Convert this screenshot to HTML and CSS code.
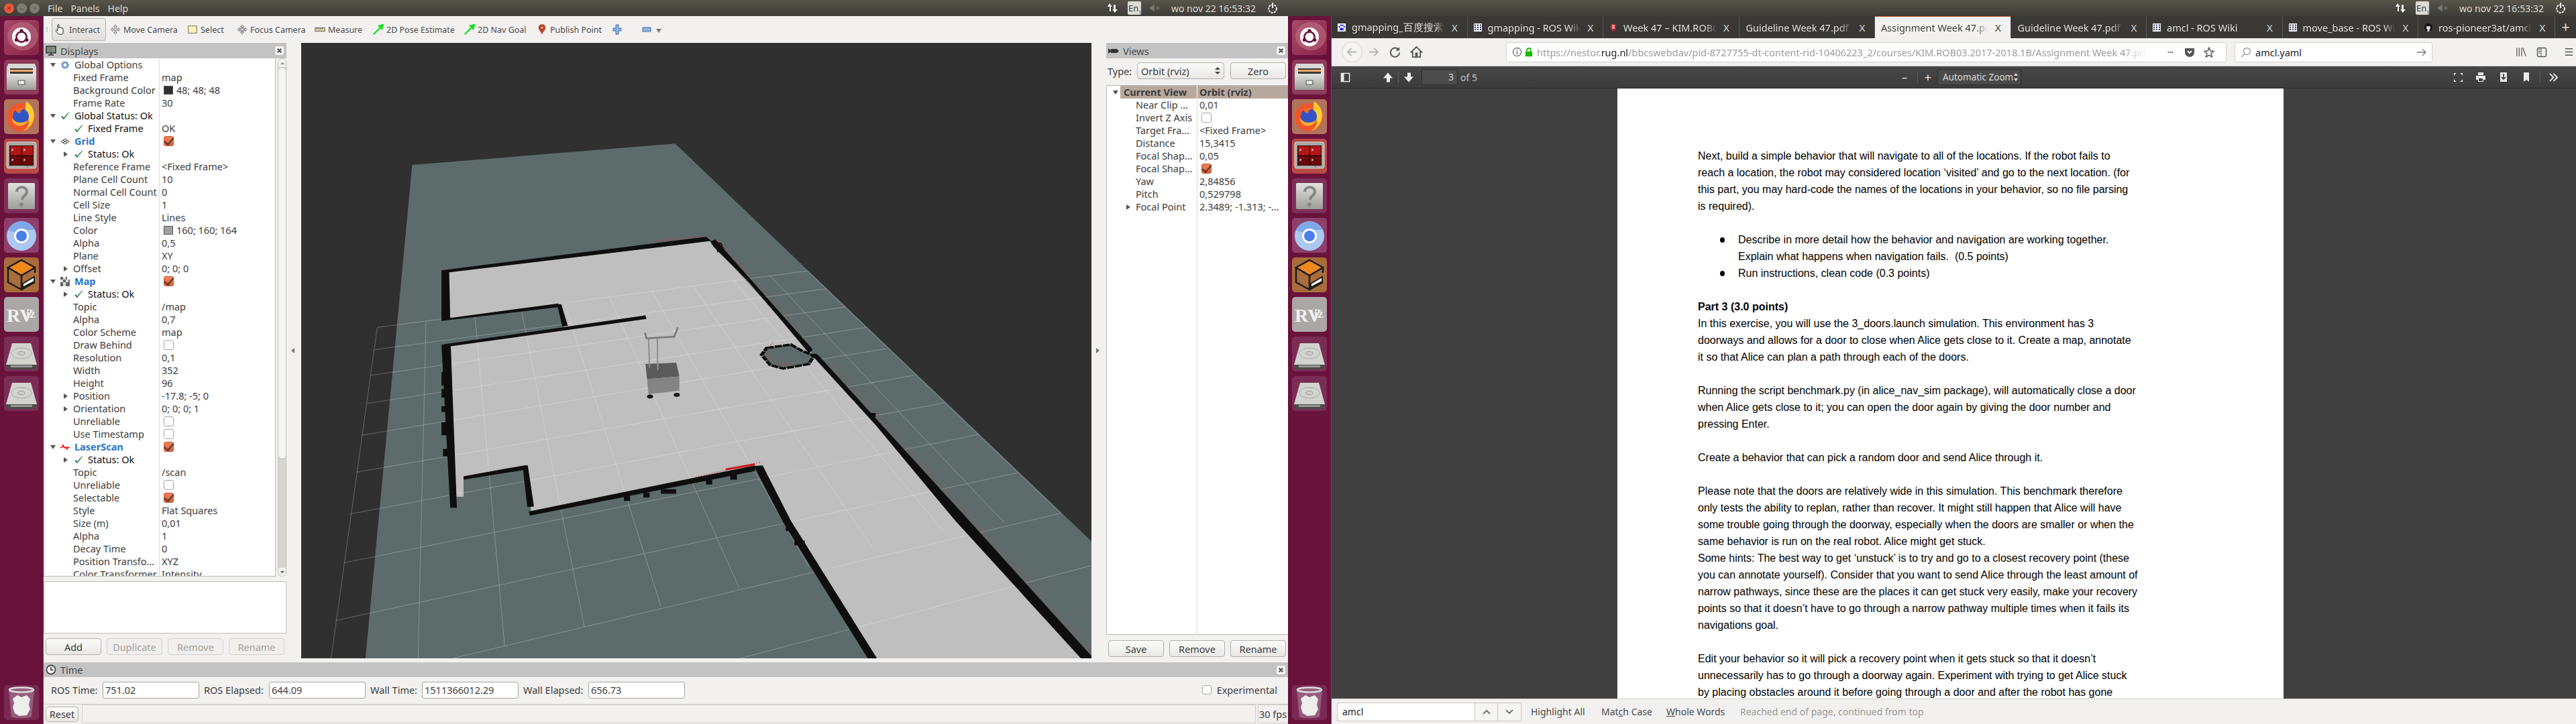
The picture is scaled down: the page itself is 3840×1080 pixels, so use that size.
FILE: index.html
```html
<!DOCTYPE html>
<html lang="en">
<head>
<meta charset="utf-8">
<title>RViz and Firefox</title>
<link rel="stylesheet" href="styles.css">
</head>
<body>
<svg class="defs" width="0" height="0" aria-hidden="true">
  <defs>
    <linearGradient id="tileCrimson" x1="0" y1="0" x2="1" y2="1"><stop offset="0" stop-color="#a44a68"/><stop offset="1" stop-color="#8c2447"/></linearGradient>
    <linearGradient id="metal" x1="0" y1="0" x2="0" y2="1"><stop offset="0" stop-color="#e2e2e0"/><stop offset="1" stop-color="#9c9c98"/></linearGradient>
    <symbol id="i-ubuntu" viewBox="0 0 52 52">
      <rect width="52" height="52" rx="5" fill="url(#tileCrimson)"/>
      <ellipse cx="28" cy="24" rx="23" ry="21" fill="#c87f92" opacity=".45"/>
      <circle cx="26" cy="25" r="14" fill="#fff"/>
      <circle cx="26" cy="25" r="7.6" fill="none" stroke="#6a1239" stroke-width="2.6"/>
      <circle cx="26" cy="16" r="2.7" fill="#6a1239"/><circle cx="18.4" cy="29.6" r="2.7" fill="#6a1239"/><circle cx="33.8" cy="29.6" r="2.7" fill="#6a1239"/>
    </symbol>
    <symbol id="i-files" viewBox="0 0 52 52">
      <rect width="52" height="52" rx="5" fill="#8f3c5a"/>
      <path d="M6 6h40l2 6v33H4V12z" fill="#d8d8d4"/>
      <rect x="9" y="13" width="34" height="9" fill="#3d3a36"/>
      <rect x="9" y="15" width="34" height="3" fill="#f0a668"/>
      <path d="M4 21h44v24H4z" fill="url(#metal)"/>
      <rect x="21" y="31" width="10" height="6" rx="1" fill="#eee" stroke="#555" stroke-width="1.2"/>
    </symbol>
    <symbol id="i-firefox" viewBox="0 0 52 52">
      <rect width="52" height="52" rx="5" fill="#b2735c"/>
      <circle cx="25" cy="27" r="21" fill="#f0562c"/>
      <path d="M33 3c12 8 15 22 9 33-3 6-9 10-14 11 9-5 10-12 8-17-2-7-6-14-3-27z" fill="#ffcb2e"/>
      <circle cx="25" cy="26" r="12" fill="#2f55c8"/>
      <path d="M12 28c5 8 16 9 24 3-3 8-11 10-17 8-4-2-7-6-7-11z" fill="#ffb02a"/>
      <path d="M17 16c4-4 10-4 13-2-3 1-6 4-6 7-3 0-6-2-7-5z" fill="#f26b22"/>
    </symbol>
    <symbol id="i-workspace" viewBox="0 0 52 52">
      <rect width="52" height="52" rx="5" fill="#b84a46"/>
      <rect x="4" y="5" width="44" height="39" rx="3" fill="#a8a8a4" stroke="#e0e0dc" stroke-width="1"/>
      <rect x="8" y="10" width="36" height="30" fill="#2a0606"/>
      <rect x="9.500" y="11" width="16" height="13.500" fill="#b01818"/><rect x="27" y="11" width="16" height="13.500" fill="#b01818"/>
      <rect x="9.500" y="26" width="16" height="13" fill="#6a0a0a"/><rect x="27" y="26" width="16" height="13" fill="#6a0a0a"/>
      <path d="M11 15l3 1.500-3 1.500M29 15l3 1.500-3 1.500M11 30l3 1.500-3 1.500M29 30l3 1.500-3 1.500" stroke="#eee" fill="none"/>
      <circle cx="35" cy="41.500" r="1" fill="#e03030"/>
    </symbol>
    <symbol id="i-help" viewBox="0 0 52 52">
      <rect width="52" height="52" rx="5" fill="#7d3159"/>
      <rect x="6" y="7" width="40" height="39" rx="1.500" fill="url(#metal)"/>
      <path d="M19 20c0-9 15-9 15 0 0 6-7 6-7 12" fill="none" stroke="#858582" stroke-width="4"/>
      <circle cx="26" cy="39" r="3" fill="#858582"/>
    </symbol>
    <symbol id="i-chromium" viewBox="0 0 52 52">
      <rect width="52" height="52" rx="5" fill="#8d3f6b"/>
      <circle cx="26" cy="27" r="22" fill="#aac8f2"/>
      <path d="M6 18A22 22 0 0 1 46 18H26a9 9 0 0 0-9 4z" fill="#7fa8e8"/>
      <circle cx="26" cy="27" r="11" fill="#fff"/><circle cx="26" cy="27" r="8" fill="#4a7fe8"/>
    </symbol>
    <symbol id="i-box" viewBox="0 0 52 52">
      <rect width="52" height="52" rx="5" fill="#a96d3b"/>
      <path d="M26 4l20 11-20 12L6 15z" fill="#f08a1e" stroke="#1c1c1c" stroke-width="2.500"/>
      <path d="M6 15v22l20 11V27M46 15v8M26 48l20-11" fill="none" stroke="#1c1c1c" stroke-width="2.500"/>
      <path d="M28 39l17-10v7l-17 9z" fill="#f4f4f4" stroke="#1c1c1c" stroke-width="2"/>
    </symbol>
    <symbol id="i-rviz" viewBox="0 0 52 52">
      <rect width="52" height="52" rx="5" fill="#aca7a7"/>
      <text class="rviz-mark" x="4" y="37">RV</text><text class="rviz-mark rviz-small" x="33" y="31">iz</text>
    </symbol>
    <symbol id="i-drive" viewBox="0 0 52 52">
      <rect width="52" height="52" rx="5" fill="#7a2d55"/>
      <path d="M12 10h28l9 32H3z" fill="#d2d2cf"/>
      <ellipse cx="26" cy="25" rx="15" ry="8" fill="none" stroke="#a9a9a6"/>
      <ellipse cx="26" cy="25" rx="5" ry="2.500" fill="none" stroke="#999"/>
      <path d="M3 42h46v2l-2 5H5l-2-5z" fill="#4b4b48"/><rect x="10" y="43" width="32" height="3" fill="#999"/>
    </symbol>
    <symbol id="i-trash" viewBox="0 0 52 52">
      <rect width="52" height="52" rx="5" fill="#7a2a52"/>
      <path d="M7 7c2-4 36-4 38 0l-4 40c-1 3-29 3-30 0z" fill="#955f7c"/>
      <ellipse cx="26" cy="7" rx="18" ry="3.500" fill="none" stroke="#ddd" stroke-width="2.500"/>
      <path d="M13 20l7-5 6 3 8-3 5 6-2 8 2 7-5 9-11 1-7-4-3-9 2-6z" fill="#eeeeec"/>
    </symbol>
    <symbol id="i-check" viewBox="0 0 14 14"><path d="M1.500 8l3.500 4L13 1.500C9.500 4.500 7 7.500 5 10.500L3.500 7.500z" fill="#1c7a34" stroke="#1c7a34" stroke-width=".6"/></symbol>
    <symbol id="i-ros" viewBox="0 0 12 12"><rect width="12" height="12" fill="#fff"/><path d="M2 1.500v9M6 1.500v9M10 1.500v9" stroke="#1f2d62" stroke-width="2" stroke-dasharray="2 1.200"/></symbol>
    <symbol id="i-close" viewBox="0 0 14 14"><path d="M4 4l6 6M10 4l-6 6" stroke="#555" stroke-width="2.400"/></symbol>
    <symbol id="i-cross" viewBox="0 0 18 18"><path d="M9 1l3 3h-2v4h4V6l3 3-3 3v-2h-4v4h2l-3 3-3-3h2v-4H4v2L1 9l3-3v2h4V4H6z" fill="#eee" stroke="#777"/></symbol>
  </defs>
</svg>

<div class="desktop">

<section class="screen">
  <header class="panel">
    <div class="winbtns">
      <span class="winbtn winbtn-close">×</span><span class="winbtn">–</span><span class="winbtn">▫</span>
    </div>
    <nav class="menus"><span>File</span><span>Panels</span><span>Help</span></nav>
    <div class="indicators">
      <svg class="ind-net" viewBox="0 0 18 18"><path d="M4 2l4 5H6v7H4V7H1zM12 16l-4-5h2V4h3v7h3z" fill="#eee"/></svg>
      <span class="ind-lang">En<sub>1</sub></span>
      <svg class="ind-sound" viewBox="0 0 18 14"><path d="M1 5h3l4-4v12L4 9H1z" fill="#77756c"/><path d="M11 5l4 4M15 5l-4 4" stroke="#77756c" stroke-width="1.400"/></svg>
      <span class="ind-clock">wo nov 22 16:53:32</span>
      <svg class="ind-gear" viewBox="0 0 18 18"><circle cx="9" cy="10" r="6" fill="none" stroke="#eee" stroke-width="2" stroke-dasharray="3 1.300"/><path d="M9 1v8" stroke="#eee" stroke-width="2"/></svg>
    </div>
  </header>
  <div class="workarea">
    <aside class="launcher">
      <svg class="tile"><use href="#i-ubuntu"/></svg>
      <svg class="tile"><use href="#i-files"/></svg>
      <svg class="tile"><use href="#i-firefox"/></svg>
      <svg class="tile"><use href="#i-workspace"/></svg>
      <svg class="tile"><use href="#i-help"/></svg>
      <svg class="tile"><use href="#i-chromium"/></svg>
      <svg class="tile"><use href="#i-box"/></svg>
      <svg class="tile"><use href="#i-rviz"/></svg>
      <svg class="tile"><use href="#i-drive"/></svg>
      <svg class="tile"><use href="#i-drive"/></svg>
      <svg class="tile tile-trash"><use href="#i-trash"/></svg>
    </aside>

    <main class="rviz">
      <div class="toolbar">
        <span class="grip"></span>
        <span class="tool tool-active">
          <svg class="ti ti-hand" viewBox="0 0 18 18"><path d="M6 16c-2-1-5-4-4.500-6 .5-1 2 0 2.500 1V3c0-2 2-2 2 0v4c0-2 2-1 2 0 0-1 2-1 2 .5 0-1 2-1 2 .5v5c0 2-1 3-1.500 3z" fill="#fff" stroke="#222"/></svg>Interact
        </span>
        <span class="tool tool-move"><svg class="ti" viewBox="0 0 18 18"><use href="#i-cross"/></svg>Move Camera</span>
        <span class="tool tool-select"><svg class="ti" viewBox="0 0 18 18"><rect x="2" y="3" width="14" height="12" fill="#fbf3b8" stroke="#222" stroke-dasharray="2 1"/></svg>Select</span>
        <span class="tool tool-focus"><svg class="ti" viewBox="0 0 18 18"><use href="#i-cross"/><circle cx="9" cy="9" r="4" fill="none" stroke="#777"/></svg>Focus Camera</span>
        <span class="tool tool-measure"><svg class="ti" viewBox="0 0 18 18"><rect x="1" y="6" width="16" height="6" fill="#e4d79c" stroke="#555"/><path d="M4 6v3M7 6v3M10 6v3M13 6v3" stroke="#555"/></svg>Measure</span>
        <span class="tool tool-pose"><svg class="ti" viewBox="0 0 18 18"><path d="M1 17L13 5M17 1l-7 2 5 5z" stroke="#19e01e" stroke-width="2.500" fill="#19e01e"/></svg>2D Pose Estimate</span>
        <span class="tool tool-nav"><svg class="ti" viewBox="0 0 18 18"><path d="M1 17L13 5M17 1l-7 2 5 5z" stroke="#19e01e" stroke-width="2.500" fill="#19e01e"/></svg>2D Nav Goal</span>
        <span class="tool tool-pin"><svg class="ti" viewBox="0 0 18 18"><path d="M9 18C7 12 3 10 3 6a6 6 0 0 1 12 0c0 4-4 6-6 12z" fill="#b8452a"/><circle cx="9" cy="6" r="1.500" fill="#f4d8c8"/></svg>Publish Point</span>
        <svg class="tplus" viewBox="0 0 14 16"><path d="M5 1h4v5h4v4H9v5H5v-5H1V6h4z" fill="#8fb3de" stroke="#3f6fae"/></svg>
        <svg class="tminus" viewBox="0 0 14 8"><rect x="1" y="1" width="12" height="6" fill="#8fb3de" stroke="#3f6fae"/></svg>
        <span class="tri tri-down tri-tool"></span>
      </div>

      <div class="mainrow">
        <div class="dock dock-left">
          <div class="dock-title">
            <svg class="dt-ico" viewBox="0 0 16 16"><rect x="1" y="1" width="14" height="10" fill="#6fa070" stroke="#222" stroke-width="1.300"/><rect x="5" y="2" width="5" height="8" fill="#a06aa0"/><path d="M8 11v2M4 14h8" stroke="#222" stroke-width="1.500"/></svg>
            <span class="dt-text">Displays</span>
            <svg class="dt-close"><use href="#i-close"/></svg>
          </div>
          <div class="treewrap">
            <div class="tree">
              <div class="row"><div class="k k0"><span class="tri tri-down"></span><svg class="st st-gear" viewBox="0 0 14 14"><circle cx="7" cy="7" r="4.500" fill="#a9c5ea" stroke="#3f73b8" stroke-width="2" stroke-dasharray="2 .9"/><circle cx="7" cy="7" r="2" fill="#fff"/></svg><span class="lbl">Global Options</span></div><div class="v"></div></div>
              <div class="row"><div class="k kp">Fixed Frame</div><div class="v">map</div></div>
              <div class="row"><div class="k kp">Background Color</div><div class="v"><i class="swatch sw-bg"></i>48; 48; 48</div></div>
              <div class="row"><div class="k kp">Frame Rate</div><div class="v">30</div></div>
              <div class="row"><div class="k k0 dark"><span class="tri tri-down"></span><svg class="st"><use href="#i-check"/></svg><span class="lbl">Global Status: Ok</span></div><div class="v"></div></div>
              <div class="row"><div class="k k1n dark"><svg class="st"><use href="#i-check"/></svg><span class="lbl">Fixed Frame</span></div><div class="v">OK</div></div>
              <div class="row"><div class="k k0 cat"><span class="tri tri-down"></span><svg class="st" viewBox="0 0 14 14"><path d="M7 3l6 4-6 4-6-4zM4 5l6 4M10 5L4 9" fill="none" stroke="#333"/></svg><span class="lbl">Grid</span></div><div class="v"><i class="cb cb-on"></i></div></div>
              <div class="row"><div class="k k1 dark"><span class="tri tri-right"></span><svg class="st"><use href="#i-check"/></svg><span class="lbl">Status: Ok</span></div><div class="v"></div></div>
              <div class="row"><div class="k kp">Reference Frame</div><div class="v">&lt;Fixed Frame&gt;</div></div>
              <div class="row"><div class="k kp">Plane Cell Count</div><div class="v">10</div></div>
              <div class="row"><div class="k kp">Normal Cell Count</div><div class="v">0</div></div>
              <div class="row"><div class="k kp">Cell Size</div><div class="v">1</div></div>
              <div class="row"><div class="k kp">Line Style</div><div class="v">Lines</div></div>
              <div class="row"><div class="k kp">Color</div><div class="v"><i class="swatch sw-grid"></i>160; 160; 164</div></div>
              <div class="row"><div class="k kp">Alpha</div><div class="v">0,5</div></div>
              <div class="row"><div class="k kp">Plane</div><div class="v">XY</div></div>
              <div class="row"><div class="k kpt"><span class="tri tri-right"></span>Offset</div><div class="v">0; 0; 0</div></div>
              <div class="row"><div class="k k0 cat"><span class="tri tri-down"></span><svg class="st" viewBox="0 0 14 14"><path d="M0 0h4v4H0zM4 4h4v4H4zM8 0h2v4H8zM12 4h2v4h-2zM0 8h4v6H0zM8 8h6v6H8z" fill="#666"/><path d="M4 0h4v4H4zM0 4h4v4H0zM8 4h4v4H8zM4 8h4v6H4z" fill="#ddd"/></svg><span class="lbl">Map</span></div><div class="v"><i class="cb cb-on"></i></div></div>
              <div class="row"><div class="k k1 dark"><span class="tri tri-right"></span><svg class="st"><use href="#i-check"/></svg><span class="lbl">Status: Ok</span></div><div class="v"></div></div>
              <div class="row"><div class="k kp">Topic</div><div class="v">/map</div></div>
              <div class="row"><div class="k kp">Alpha</div><div class="v">0,7</div></div>
              <div class="row"><div class="k kp">Color Scheme</div><div class="v">map</div></div>
              <div class="row"><div class="k kp">Draw Behind</div><div class="v"><i class="cb"></i></div></div>
              <div class="row"><div class="k kp">Resolution</div><div class="v">0,1</div></div>
              <div class="row"><div class="k kp">Width</div><div class="v">352</div></div>
              <div class="row"><div class="k kp">Height</div><div class="v">96</div></div>
              <div class="row"><div class="k kpt"><span class="tri tri-right"></span>Position</div><div class="v">-17.8; -5; 0</div></div>
              <div class="row"><div class="k kpt"><span class="tri tri-right"></span>Orientation</div><div class="v">0; 0; 0; 1</div></div>
              <div class="row"><div class="k kp">Unreliable</div><div class="v"><i class="cb"></i></div></div>
              <div class="row"><div class="k kp">Use Timestamp</div><div class="v"><i class="cb"></i></div></div>
              <div class="row"><div class="k k0 cat"><span class="tri tri-down"></span><svg class="st" viewBox="0 0 14 14"><path d="M0 8l3-1 1-3 2 4 2-1 2 3 1-3 3 1" fill="none" stroke="#f00" stroke-width="1.500"/></svg><span class="lbl">LaserScan</span></div><div class="v"><i class="cb cb-on"></i></div></div>
              <div class="row"><div class="k k1 dark"><span class="tri tri-right"></span><svg class="st"><use href="#i-check"/></svg><span class="lbl">Status: Ok</span></div><div class="v"></div></div>
              <div class="row"><div class="k kp">Topic</div><div class="v">/scan</div></div>
              <div class="row"><div class="k kp">Unreliable</div><div class="v"><i class="cb"></i></div></div>
              <div class="row"><div class="k kp">Selectable</div><div class="v"><i class="cb cb-on"></i></div></div>
              <div class="row"><div class="k kp">Style</div><div class="v">Flat Squares</div></div>
              <div class="row"><div class="k kp">Size (m)</div><div class="v">0,01</div></div>
              <div class="row"><div class="k kp">Alpha</div><div class="v">1</div></div>
              <div class="row"><div class="k kp">Decay Time</div><div class="v">0</div></div>
              <div class="row"><div class="k kp">Position Transfo…</div><div class="v">XYZ</div></div>
              <div class="row"><div class="k kp">Color Transformer</div><div class="v">Intensity</div></div>
            </div>
            <div class="vscroll">
              <span class="vs-btn"><span class="tri tri-up"></span></span>
              <span class="vs-track"><span class="vs-thumb"></span></span>
              <span class="vs-btn"><span class="tri tri-down tri-small"></span></span>
            </div>
          </div>
          <div class="handle"></div>
          <div class="descbox"></div>
          <div class="btnrow">
            <span class="btn">Add</span><span class="btn btn-off">Duplicate</span><span class="btn btn-off">Remove</span><span class="btn btn-off">Rename</span>
          </div>
        </div>

        <div class="split"><span class="tri tri-left"></span></div>

        <div class="view3d">
          <svg class="scene" viewBox="12 -266.600 1538 1798.600" preserveAspectRatio="none">
            <rect x="12" y="-267" width="1538" height="1800" fill="#303030"/>
            <polygon class="teal" points="228,90 740,28 1550,1190 1550,1533 137,1533"/>
            <polygon class="floor" points="298,403 808,312 1550,1545 1130,1545 900,975 460,1108 448,975 328,1005 328,1060 312,1060 303,618 525,570 512,500 300,540"/>
            <polygon class="teal" points="918,630 965,615 1003,660 945,682 915,650"/>
            <g class="gridlines">
              <line x1="160" y1="565" x2="997" y2="400"/><line x1="155" y1="630" x2="1035" y2="452"/><line x1="148" y1="705" x2="1072" y2="505"/><line x1="140" y1="787" x2="1112" y2="565"/><line x1="130" y1="880" x2="1150" y2="627"/><line x1="120" y1="988" x2="1205" y2="705"/><line x1="108" y1="1110" x2="1265" y2="785"/><line x1="95" y1="1253" x2="1330" y2="878"/><line x1="78" y1="1422" x2="1405" y2="990"/><line x1="62" y1="1620" x2="1490" y2="1108"/><line x1="40" y1="1860" x2="1590" y2="1245"/>
              <line x1="160" y1="565" x2="62" y2="1620"/><line x1="255" y1="546" x2="239" y2="1557"/><line x1="350" y1="528" x2="408" y2="1497"/><line x1="440" y1="510" x2="563" y2="1440"/><line x1="525" y1="495" x2="712" y2="1380"/><line x1="612" y1="476" x2="864" y2="1325"/><line x1="695" y1="460" x2="1000" y2="1265"/><line x1="775" y1="445" x2="1125" y2="1210"/><line x1="855" y1="430" x2="1262" y2="1160"/><line x1="925" y1="415" x2="1380" y2="1135"/><line x1="997" y1="400" x2="1490" y2="1108"/>
            </g>
            <g class="walls">
              <polygon points="285,398 800,300 810,312 300,404 302,537 512,495 517,505 285,546"/>
              <polygon points="510,497 518,497 531,560 520,562"/>
              <polygon points="286,615 682,530 684,540 303,620"/>
              <polygon points="285,615 303,618 315,1092 302,1092"/>
              <rect x="285" y="695" width="16" height="40"/><rect x="285" y="745" width="17" height="25"/><rect x="285" y="795" width="16" height="17"/><rect x="285" y="842" width="18" height="38"/><rect x="288" y="920" width="20" height="22"/>
              <polygon points="328,1000 450,967 452,980 328,1010"/>
              <polygon points="443,970 453,968 465,1088 452,1090"/>
              <polygon points="455,1103 895,968 895,985 457,1115"/>
              <rect x="640" y="1055" width="12" height="17"/><rect x="678" y="1048" width="12" height="14"/><rect x="712" y="1038" width="30" height="13"/><rect x="800" y="1010" width="12" height="14"/><rect x="847" y="995" width="13" height="15"/>
              <polygon points="893,970 910,968 965,1130 1133,1533 1115,1533 950,1135"/>
              <rect x="955" y="1148" width="17" height="12"/><rect x="972" y="1188" width="20" height="14"/>
              <polygon points="808,314 818,308 1008,630 1000,640 885,435 845,375 815,330"/>
              <polygon points="815,312 830,318 838,345 822,345"/>
              <polygon points="1000,642 1015,642 1022,652 1145,855 1300,1110 1550,1525 1550,1533 1530,1533 1285,1130 1130,850 1012,656"/>
              <rect x="1118" y="815" width="12" height="12"/>
              <polygon class="hole" points="918,625 965,615 985,632 1010,648 1000,672 950,685 925,675 908,645"/>
            </g>
            <g class="laser">
              <line x1="695" y1="315" x2="790" y2="298"/><line x1="820" y1="310" x2="985" y2="575"/><line x1="1040" y1="665" x2="1130" y2="815"/><line x1="1130" y1="815" x2="1550" y2="1510"/><line x1="780" y1="1002" x2="908" y2="958"/>
              <path d="M930 607l-12 25 4 26 20 14 30 2"/>
            </g>
            <polygon class="laser-thick" points="838,977 895,962 895,968 838,983"/>
            <g class="robot">
              <polygon class="r-top" points="682,672 742,668 748,708 685,716"/>
              <polygon class="r-front" points="685,716 748,708 748,750 688,760"/>
              <circle class="r-wheel" cx="691" cy="767" r="6"/><circle class="r-wheel" cx="743" cy="762" r="6"/>
              <path class="r-pole" d="M688 598l2 84M705 598l1 92"/>
              <path class="r-handle" d="M681 580l3 17 54-5 7-27"/>
            </g>
          </svg>
        </div>

        <div class="split"><span class="tri tri-rightg"></span></div>

        <div class="dock dock-right">
          <div class="dock-title">
            <svg class="dt-ico" viewBox="0 0 16 16"><path d="M0 4l4 3V5h9l3 3-3 3H4V9l-4 3z" fill="#333"/></svg>
            <span class="dt-text">Views</span>
            <svg class="dt-close"><use href="#i-close"/></svg>
          </div>
          <div class="typerow">
            <span class="type-lbl">Type:</span>
            <span class="combo">Orbit (rviz)<span class="updown"></span></span>
            <span class="btn btn-zero">Zero</span>
          </div>
          <div class="vtree">
            <div class="row vrow-h"><div class="vk vk-h"><span class="tri tri-down vtri"></span><b>Current View</b></div><div class="vv vv-h"><b>Orbit (rviz)</b></div></div>
            <div class="row"><div class="vk">Near Clip …</div><div class="vv">0,01</div></div>
            <div class="row"><div class="vk">Invert Z Axis</div><div class="vv"><i class="cb"></i></div></div>
            <div class="row"><div class="vk">Target Fra…</div><div class="vv">&lt;Fixed Frame&gt;</div></div>
            <div class="row"><div class="vk">Distance</div><div class="vv">15,3415</div></div>
            <div class="row"><div class="vk">Focal Shap…</div><div class="vv">0,05</div></div>
            <div class="row"><div class="vk">Focal Shap…</div><div class="vv"><i class="cb cb-on"></i></div></div>
            <div class="row"><div class="vk">Yaw</div><div class="vv">2,84856</div></div>
            <div class="row"><div class="vk">Pitch</div><div class="vv">0,529798</div></div>
            <div class="row"><div class="vk vk-t"><span class="tri tri-right"></span>Focal Point</div><div class="vv">2.3489; -1.313; -…</div></div>
            <div class="vfill"><div class="vfill-l"></div></div>
          </div>
          <div class="btnrow btnrow-right">
            <span class="btn">Save</span><span class="btn">Remove</span><span class="btn">Rename</span>
          </div>
        </div>
      </div>

      <div class="timedock">
        <div class="dock-title">
          <svg class="dt-ico" viewBox="0 0 16 16"><circle cx="8" cy="8" r="6.500" fill="#fff" stroke="#444" stroke-width="1.800"/><path d="M8 4v4.500h3.500" fill="none" stroke="#222" stroke-width="1.500"/></svg>
          <span class="dt-text">Time</span>
          <svg class="dt-close"><use href="#i-close"/></svg>
        </div>
        <div class="timerow">
          <span class="tl tl-a">ROS Time:</span><span class="tf">751.02</span>
          <span class="tl tl-b">ROS Elapsed:</span><span class="tf">644.09</span>
          <span class="tl tl-a">Wall Time:</span><span class="tf">1511366012.29</span>
          <span class="tl tl-b">Wall Elapsed:</span><span class="tf">656.73</span>
          <span class="exp"><i class="cb"></i>Experimental</span>
        </div>
      </div>

      <div class="statusbar">
        <span class="btn btn-reset">Reset</span>
        <span class="sb-box"></span>
        <span class="sb-fps">30 fps</span>
      </div>
    </main>
  </div>
</section>

<section class="screen">
  <header class="panel">
    <div class="indicators">
      <svg class="ind-net" viewBox="0 0 18 18"><path d="M4 2l4 5H6v7H4V7H1zM12 16l-4-5h2V4h3v7h3z" fill="#eee"/></svg>
      <span class="ind-lang">En<sub>1</sub></span>
      <svg class="ind-sound" viewBox="0 0 18 14"><path d="M1 5h3l4-4v12L4 9H1z" fill="#77756c"/><path d="M11 5l4 4M15 5l-4 4" stroke="#77756c" stroke-width="1.400"/></svg>
      <span class="ind-clock">wo nov 22 16:53:32</span>
      <svg class="ind-gear" viewBox="0 0 18 18"><circle cx="9" cy="10" r="6" fill="none" stroke="#eee" stroke-width="2" stroke-dasharray="3 1.300"/><path d="M9 1v8" stroke="#eee" stroke-width="2"/></svg>
    </div>
  </header>
  <div class="workarea">
    <aside class="launcher">
      <svg class="tile"><use href="#i-ubuntu"/></svg>
      <svg class="tile"><use href="#i-files"/></svg>
      <svg class="tile"><use href="#i-firefox"/></svg>
      <svg class="tile"><use href="#i-workspace"/></svg>
      <svg class="tile"><use href="#i-help"/></svg>
      <svg class="tile"><use href="#i-chromium"/></svg>
      <svg class="tile"><use href="#i-box"/></svg>
      <svg class="tile"><use href="#i-rviz"/></svg>
      <svg class="tile"><use href="#i-drive"/></svg>
      <svg class="tile"><use href="#i-drive"/></svg>
      <svg class="tile tile-trash"><use href="#i-trash"/></svg>
    </aside>

    <main class="firefox">
      <div class="tabs">
        <div class="tab"><svg class="fav" viewBox="0 0 12 12"><rect width="12" height="12" fill="#fff"/><path d="M6 6c-3 0-4 4-2 4.500 1 .2 3-.5 4 0C10 11 9 6 6 6z" fill="#2932e1"/><circle cx="2.500" cy="5" r="1.300" fill="#2932e1"/><circle cx="4.800" cy="2.800" r="1.300" fill="#2932e1"/><circle cx="7.500" cy="2.800" r="1.300" fill="#2932e1"/><circle cx="9.800" cy="5" r="1.300" fill="#2932e1"/></svg><span class="tt">gmapping_百度搜索</span><span class="tx">X</span></div>
        <div class="tab"><svg class="fav"><use href="#i-ros"/></svg><span class="tt">gmapping - ROS Wiki</span><span class="tx">X</span></div>
        <div class="tab"><svg class="fav" viewBox="0 0 12 12"><path d="M2 1h8v7l-4 4-4-4z" fill="#c8202c"/><path d="M4 3h4M4 5h4M4 7h4" stroke="#fff"/></svg><span class="tt">Week 47 – KIM.ROB03.2017-2018</span><span class="tx">X</span></div>
        <div class="tab tab-nofav"><span class="tt">Guideline Week 47.pdf</span><span class="tx">X</span></div>
        <div class="tab tab-active"><span class="tt tt-fade">Assignment Week 47.pdf</span><span class="tx">X</span></div>
        <div class="tab tab-nofav"><span class="tt">Guideline Week 47.pdf</span><span class="tx">X</span></div>
        <div class="tab"><svg class="fav"><use href="#i-ros"/></svg><span class="tt">amcl - ROS Wiki</span><span class="tx">X</span></div>
        <div class="tab"><svg class="fav"><use href="#i-ros"/></svg><span class="tt tt-fade">move_base - ROS Wiki</span><span class="tx">X</span></div>
        <div class="tab tab-last"><svg class="fav" viewBox="0 0 12 12"><circle cx="6" cy="6" r="6" fill="#111"/><path d="M4.500 12V9C3 8 2.500 6.500 3.500 5V3.500l1.500.8h2L8.500 3.500V5c1 1.500.5 3-1 4v3z" fill="#ddd"/></svg><span class="tt tt-fade">ros-pioneer3at/amcl</span><span class="tx">X</span></div>
        <span class="newtab">+</span>
      </div>

      <div class="nav">
        <span class="navback"><svg viewBox="0 0 20 20"><path d="M17 10H4M9 4l-6 6 6 6" fill="none" stroke="#b5b5b3" stroke-width="2"/></svg></span>
        <svg class="navicon nav-fwd" viewBox="0 0 20 20"><path d="M3 10h13M11 4l6 6-6 6" fill="none" stroke="#b5b5b3" stroke-width="2"/></svg>
        <svg class="navicon nav-reload" viewBox="0 0 20 20"><path d="M16 7a7 7 0 1 0 1 4" fill="none" stroke="#555" stroke-width="2"/><path d="M17 2v6h-6z" fill="#555"/></svg>
        <svg class="navicon nav-home" viewBox="0 0 20 20"><path d="M10 2l8 8h-2v8H4v-8H2z" fill="none" stroke="#555" stroke-width="2"/><rect x="8" y="11" width="4" height="7" fill="#555"/></svg>
        <div class="urlbar">
          <svg class="ub-info" viewBox="0 0 16 16"><circle cx="8" cy="8" r="6.500" fill="none" stroke="#666" stroke-width="1.300"/><path d="M8 7v5M8 4v1.500" stroke="#666" stroke-width="1.600"/></svg>
          <svg class="ub-lock" viewBox="0 0 14 16"><path d="M3.500 7V5a3.500 3.500 0 0 1 7 0v2" fill="none" stroke="#12bc00" stroke-width="2"/><rect x="1" y="7" width="12" height="9" rx="1" fill="#12bc00"/></svg>
          <span class="ub-url">https://nestor.<b>rug.nl</b>/bbcswebdav/pid-8727755-dt-content-rid-10406223_2/courses/KIM.ROB03.2017-2018.1B/Assignment Week 47.pdf</span>
          <span class="ub-more">•••</span>
          <svg class="ub-pocket" viewBox="0 0 16 16"><path d="M1 2h14v6A7 7 0 0 1 1 8z" fill="#555"/><path d="M5 6l3 3 3-3" fill="none" stroke="#fff" stroke-width="2"/></svg>
          <svg class="ub-star" viewBox="0 0 16 16"><path d="M8 1l2 5 5 .5-4 3.500 1.500 5L8 12.300 3.500 15 5 10 1 6.500 6 6z" fill="none" stroke="#555" stroke-width="1.500"/></svg>
        </div>
        <div class="searchbar">
          <svg class="sb-mag" viewBox="0 0 16 16"><circle cx="9.500" cy="6.500" r="5" fill="none" stroke="#999" stroke-width="1.300"/><path d="M6 10.500L1 15" stroke="#999" stroke-width="1.500"/></svg>
          <span class="sb-text">amcl.yaml</span>
          <svg class="sb-go" viewBox="0 0 16 16"><path d="M1 8h13M9 3l5 5-5 5" fill="none" stroke="#777" stroke-width="1.300"/></svg>
        </div>
        <svg class="tb-lib" viewBox="0 0 18 16"><path d="M2 1v14M6 1v14M10 1v14M12 1l5 14" stroke="#555" stroke-width="1.400"/></svg>
        <svg class="tb-side" viewBox="0 0 16 16"><rect x="1.500" y="1.500" width="13" height="13" rx="2" fill="none" stroke="#555" stroke-width="1.400"/><path d="M7 2v12" stroke="#555"/><path d="M3 4h3M3 6.500h3M3 9h3" stroke="#555"/></svg>
        <svg class="tb-menu" viewBox="0 0 16 16"><path d="M2 3h12M2 8h12M2 13h12" stroke="#555" stroke-width="1.600"/></svg>
      </div>

      <div class="pdfbar">
        <svg class="pb-side" viewBox="0 0 16 16"><rect x="1.500" y="1.500" width="13" height="13" fill="none" stroke="#e8e8e8" stroke-width="1.600"/><rect x="2" y="2" width="4" height="12" fill="#e8e8e8"/></svg>
        <svg class="pb-up" viewBox="0 0 16 16"><path d="M8 1l7 8h-4v6H6V9H1z" fill="#eee"/></svg>
        <i class="pb-sep"></i>
        <svg class="pb-down" viewBox="0 0 16 16"><path d="M8 15l7-8h-4V1H6v6H1z" fill="#eee"/></svg>
        <span class="pb-page">3</span>
        <span class="pb-of">of 5</span>
        <span class="pb-minus">–</span>
        <i class="pb-sep"></i>
        <span class="pb-plus">+</span>
        <span class="pb-zoom">Automatic Zoom<svg class="pb-updown" viewBox="0 0 8 14"><path d="M4 1l3 4H1zM4 13l3-4H1z" fill="#ddd"/></svg></span>
        <svg class="pb-full" viewBox="0 0 16 16"><path d="M1 1h4L1 5zM15 1h-4l4 4zM1 15h4l-4-4zM15 15h-4l4-4z" fill="#e8e8e8"/></svg>
        <svg class="pb-r" viewBox="0 0 16 16"><path d="M4 1h8v4H4zM1 6h14v6h-3v3H4v-3H1z" fill="#e8e8e8"/><rect x="5" y="10" width="6" height="4" fill="#444"/></svg>
        <svg class="pb-r" viewBox="0 0 16 16"><path d="M3 1h10v14H3z" fill="#e8e8e8"/><path d="M8 3v7M5 8l3 3 3-3" fill="none" stroke="#333" stroke-width="1.600"/></svg>
        <svg class="pb-r" viewBox="0 0 16 16"><path d="M4 1h8v14l-4-3-4 3z" fill="#e8e8e8"/></svg>
        <i class="pb-sep pb-sep-r"></i>
        <svg class="pb-more" viewBox="0 0 16 16"><path d="M2 2l6 6-6 6M8 2l6 6-6 6" fill="none" stroke="#e8e8e8" stroke-width="2"/></svg>
      </div>

      <div class="viewer">
        <article class="page">
          <p>Next, build a simple behavior that will navigate to all of the locations. If the robot fails to<br>reach a location, the robot may considered location ‘visited’ and go to the next location. (for<br>this part, you may hard-code the names of the locations in your behavior, so no file parsing<br>is required).</p>
          <ul>
            <li>Describe in more detail how the behavior and navigation are working together.<br>Explain what happens when navigation fails.&nbsp; (0.5 points)</li>
            <li>Run instructions, clean code (0.3 points)</li>
          </ul>
          <p><b>Part 3 (3.0 points)</b><br>In this exercise, you will use the 3_doors.launch simulation. This environment has 3<br>doorways and allows for a door to close when Alice gets close to it. Create a map, annotate<br>it so that Alice can plan a path through each of the doors.</p>
          <p>Running the script benchmark.py (in alice_nav_sim package), will automatically close a door<br>when Alice gets close to it; you can open the door again by giving the door number and<br>pressing Enter.</p>
          <p>Create a behavior that can pick a random door and send Alice through it.</p>
          <p>Please note that the doors are relatively wide in this simulation. This benchmark therefore<br>only tests the ability to replan, rather than recover. It might still happen that Alice will have<br>some trouble going through the doorway, especially when the doors are smaller or when the<br>same behavior is run on the real robot. Alice might get stuck.<br>Some hints: The best way to get ‘unstuck’ is to try and go to a closest recovery point (these<br>you can annotate yourself). Consider that you want to send Alice through the least amount of<br>narrow pathways, since these are the places it can get stuck very easily, make your recovery<br>points so that it doesn’t have to go through a narrow pathway multiple times when it fails its<br>navigations goal.</p>
          <p>Edit your behavior so it will pick a recovery point when it gets stuck so that it doesn’t<br>unnecessarily has to go through a doorway again. Experiment with trying to get Alice stuck<br>by placing obstacles around it before going through a door and after the robot has gone</p>
        </article>
      </div>

      <div class="findbar">
        <span class="fb-input">amcl</span>
        <span class="fb-arrow"><svg viewBox="0 0 12 8"><path d="M1 7l5-5 5 5" fill="none" stroke="#555" stroke-width="1.600"/></svg></span>
        <span class="fb-arrow fb-arrow-d"><svg viewBox="0 0 12 8"><path d="M1 1l5 5 5-5" fill="none" stroke="#555" stroke-width="1.600"/></svg></span>
        <span class="fb-opt fb-h">Highli<u>g</u>ht All</span>
        <span class="fb-opt fb-m">Mat<u>c</u>h Case</span>
        <span class="fb-opt fb-w"><u>W</u>hole Words</span>
        <span class="fb-msg">Reached end of page, continued from top</span>
      </div>
    </main>
  </div>
</section>

</div>
</body>
</html>
```

FILE: styles.css
```css
* { box-sizing: border-box; }
html, body { margin: 0; padding: 0; }
body { width: 3840px; height: 1080px; overflow: hidden; background: #333; font-family: "Noto Sans", sans-serif; font-size: 14px; color: #3c3c3c; }
.defs { display: block; }
.desktop { display: flex; width: 3840px; height: 1080px; }
.screen { width: 1920px; height: 1080px; display: flex; flex-direction: column; }

/* top panel */
.panel { height: 24px; flex: none; display: flex; align-items: center; background: linear-gradient(#57544a, #3d3c37); color: #dfdbd2; font-size: 14px; }
.winbtns { display: flex; gap: 4px; padding-left: 6px; width: 68px; }
.winbtn { width: 15px; height: 15px; border-radius: 50%; background: #7d7b72; color: #3d3c37; font-size: 11px; line-height: 14px; text-align: center; }
.winbtn-close { background: #e9583a; color: #7a2610; }
.menus { display: flex; gap: 12px; padding-left: 3px; }
.indicators { margin-left: auto; display: flex; align-items: center; }
.ind-net { width: 18px; height: 18px; margin-right: 13px; }
.ind-lang { width: 20px; height: 20px; background: #dcdad4; color: #3d3c37; border-radius: 2px; font-size: 13px; line-height: 20px; padding-left: 1px; overflow: hidden; white-space: nowrap; }
.ind-lang sub { font-size: 7px; line-height: 0; }
.ind-sound { width: 18px; height: 14px; margin-left: 12px; }
.ind-clock { margin-left: 15px; width: 135px; white-space: nowrap; }
.ind-gear { width: 18px; height: 18px; margin-left: 7px; margin-right: 14px; }

.workarea { flex: 1; display: flex; min-height: 0; }

/* launcher */
.launcher { width: 65px; flex: none; background: #69123a; border-right: 1px solid #7d3a58; display: flex; flex-direction: column; align-items: flex-start; padding: 6px 0 0 6px; gap: 7px; }
.tile { width: 52px; height: 52px; flex: none; display: block; }
.tile-trash { margin-top: auto; margin-bottom: 6px; }
.rviz-mark { font-family: "Liberation Serif", serif; font-weight: 700; font-size: 28px; fill: #f2f0ee; }
.rviz-small { font-size: 19px; }

/* rviz window */
.rviz { flex: 1; min-width: 0; display: flex; flex-direction: column; background: #f2f1f0; }
.toolbar { height: 40px; flex: none; display: flex; align-items: center; font-size: 12.500px; color: #4a4a4a; white-space: nowrap; }
.grip { width: 4px; height: 8px; margin-left: 4px; border-left: 2px dotted #c5c3bf; border-right: 0; }
.tool { display: inline-flex; align-items: center; }
.ti { width: 16px; height: 16px; flex: none; margin-right: 4px; }
.tool-active { width: 81px; height: 34px; margin-left: 4px; padding-left: 4px; border: 1px solid #b3b1ac; border-radius: 4px; background: linear-gradient(#f0efed, #e0dfdb); }
.ti-hand { width: 18px; height: 18px; margin-right: 3px; }
.tool-move { margin-left: 6px; width: 115px; }
.tool-select { width: 74px; }
.tool-focus { width: 116px; }
.tool-measure { width: 87px; }
.tool-pose { width: 136px; }
.tool-nav { width: 108px; }
.tool-pin { width: 113px; }
.tplus { width: 14px; height: 16px; }
.tminus { width: 14px; height: 8px; margin-left: 30px; }
.tri { display: inline-block; width: 0; height: 0; flex: none; border-style: solid; border-color: transparent; }
.tri-down { border-width: 6px 4px 0; border-top-color: #555; }
.tri-right { border-width: 4px 0 4px 6px; border-left-color: #555; }
.tri-up { border-width: 0 3px 3px; border-bottom-color: #888; }
.tri-left { border-width: 4px 5px 4px 0; border-right-color: #777; }
.tri-rightg { border-width: 4px 0 4px 5px; border-left-color: #777; }
.tri-small { border-width: 3px 3px 0; }
.tri-tool { margin-left: 7px; margin-top: 4px; border-top-color: #777; }

.mainrow { height: 918px; flex: none; display: flex; }
.dock { display: flex; flex-direction: column; flex: none; }
.dock-left { width: 362px; }
.dock-right { width: 271px; }
.dock-title { height: 23px; flex: none; display: flex; align-items: center; background: #c3c3c3; padding: 0 4px 0 3px; color: #4a4a4a; font-size: 14.500px; }
.dt-ico { width: 16px; height: 16px; flex: none; margin-right: 6px; }
.dt-text { flex: 1; }
.dt-close { width: 13px; height: 13px; background: #f4f3f1; border-radius: 3px; flex: none; }

.treewrap { height: 773px; flex: none; display: flex; }
.tree { width: 346px; height: 773px; overflow: hidden; background: #fff; border-left: 1px solid #b9b7b3; border-right: 1px solid #b9b7b3; border-bottom: 1px solid #b9b7b3; flex: none; }
.row { height: 19px; display: flex; align-items: center; white-space: nowrap; font-size: 14.500px; line-height: 19px; }
.k { width: 172px; height: 19px; flex: none; display: flex; align-items: center; border-right: 1px solid #dcdad6; overflow: hidden; }
.kp { padding-left: 43px; }
.kpt { padding-left: 29px; }
.kpt .tri { margin-right: 8px; }
.k0 { padding-left: 9px; }
.k0 .tri { margin-right: 7px; }
.k1 { padding-left: 29px; }
.k1 .tri { margin-right: 9px; }
.k1n { padding-left: 44px; }
.st { width: 14px; height: 14px; flex: none; margin-right: 7px; }
.dark { color: #111; }
.cat .lbl { color: #2a74c6; font-weight: 700; }
.v { flex: 1; height: 19px; display: flex; align-items: center; padding-left: 3px; color: #3c3c3c; }
.swatch { width: 14px; height: 13px; margin: 0 5px 0 3px; border: 1px solid #555; display: inline-block; }
.sw-bg { background: #303030; }
.sw-grid { background: #a0a0a4; }
.cb { display: inline-block; width: 15px; height: 15px; margin-left: 3px; border: 1px solid #a8a6a2; border-radius: 3px; background: #fff; flex: none; position: relative; }
.cb-on { background: linear-gradient(#f0825a, #d9603a); border-color: #c8552f; }
.cb-on::after { content: ""; position: absolute; left: 3px; top: -2px; width: 6px; height: 12px; border-right: 2px solid #4a3428; border-bottom: 2px solid #4a3428; transform: rotate(40deg); }

.vscroll { width: 13px; margin-left: 3px; height: 773px; display: flex; flex-direction: column; border: 1px solid #c4c2be; border-radius: 6px; background: #d6d5d2; overflow: hidden; }
.vs-btn { height: 12px; flex: none; background: #f2f1f0; display: flex; align-items: center; justify-content: center; }
.vs-track { flex: 1; }
.vs-thumb { display: block; height: 585px; background: #f6f5f4; border-bottom: 1px solid #aaa; border-radius: 5px; border-top: 1px solid #bbb; }

.handle { height: 7px; flex: none; }
.descbox { height: 78px; flex: none; background: #fff; border: 1px solid #c2c0bc; }
.btnrow { display: flex; gap: 8px; padding: 7px 3px 0; flex: none; }
.btn { display: flex; align-items: center; justify-content: center; height: 25px; width: 83px; border: 1px solid #b3b1ac; border-radius: 4px; background: linear-gradient(#fbfbfa, #e9e8e5); color: #3c3c3c; font-size: 14.500px; flex: none; }
.btn-off { color: #a3a19c; border-color: #d4d2ce; background: #f0efed; }
.btnrow-right { padding: 8px 3px 0; }

.split { width: 22px; flex: none; display: flex; align-items: center; padding-left: 7px; padding-bottom: 0; }
.view3d { width: 1178px; flex: none; background: #303030; overflow: hidden; }
.scene { display: block; width: 1178px; height: 918px; }
.teal { fill: #5d6c6b; }
.floor { fill: #bfbfbf; }
.gridlines line { stroke: rgba(255, 255, 255, .26); stroke-width: 1; vector-effect: non-scaling-stroke; }
.walls { fill: #0e0e0e; }
.hole { fill: #5d6c6b; stroke: #0e0e0e; stroke-width: 7; stroke-dasharray: 14 2; }
.laser line, .laser path { stroke: #d8323c; stroke-width: 1; fill: none; vector-effect: non-scaling-stroke; stroke-dasharray: 2 2; }
.laser-thick { fill: #d01818; }
.r-top { fill: #5b5b5b; }
.r-front { fill: #848484; }
.r-wheel { fill: #1a1a1a; }
.r-pole { stroke: #8e8e8e; stroke-width: 2; fill: none; vector-effect: non-scaling-stroke; }
.r-handle { stroke: #777; stroke-width: 2.500; fill: none; vector-effect: non-scaling-stroke; }

.typerow { height: 25px; margin-top: 6px; display: flex; align-items: center; flex: none; font-size: 14.500px; }
.type-lbl { width: 46px; padding-left: 2px; }
.combo { width: 130px; height: 25px; display: flex; align-items: center; padding-left: 5px; border: 1px solid #b3b1ac; border-radius: 4px; background: linear-gradient(#fbfbfa, #e9e8e5); position: relative; }
.updown { position: absolute; right: 5px; top: 6px; width: 0; height: 0; border: 4px solid transparent; border-bottom-color: #444; border-top: 0; box-shadow: none; }
.updown::after { content: ""; position: absolute; left: -4px; top: 7px; border: 4px solid transparent; border-top-color: #444; border-bottom: 0; }
.btn-zero { margin-left: 9px; }
.vtree { margin-top: 9px; height: 820px; width: 271px; flex: none; background: #fff; border-left: 1px solid #b9b7b3; border-top: 1px solid #b9b7b3; border-bottom: 1px solid #b9b7b3; display: flex; flex-direction: column; }
.vrow-h { height: 19px; }
.vk { width: 135px; height: 19px; flex: none; padding-left: 43px; border-right: 1px solid #dcdad6; display: flex; align-items: center; overflow: hidden; }
.vk-h { padding-left: 0; border-right-color: #fff; background: linear-gradient(90deg, #fff 20px, #b8a99e 20px); color: #3c3c3c; }
.vk-h b { margin-left: 3px; }
.vtri { margin: 0 5px 0 9px; }
.vk-t { padding-left: 29px; }
.vk-t .tri { margin-right: 8px; }
.vv { flex: 1; height: 19px; padding-left: 3px; display: flex; align-items: center; overflow: hidden; }
.vv-h { background: #b8a99e; }
.vfill { flex: 1; }
.vfill-l { width: 135px; height: 100%; border-right: 1px solid #dcdad6; }

.timedock { height: 62px; margin-top: 6px; flex: none; display: flex; flex-direction: column; }
.timedock .dock-title { height: 22px; }
.timedock .dt-ico { margin-right: 6px; }
.timerow { flex: 1; display: flex; align-items: center; padding: 0 16px 2px 11px; font-size: 14.500px; }
.tl { margin-right: 8px; white-space: nowrap; flex: none; }
.tl-a { width: 69px; }
.tl-b { width: 89px; }
.tf { width: 144px; height: 25px; margin-right: 7px; background: #fff; border: 1px solid #a8a6a2; border-radius: 3px; padding-left: 3px; line-height: 22px; flex: none; }
.exp { margin-left: auto; display: flex; align-items: center; gap: 8px; }
.exp .cb { width: 14px; height: 14px; }

.statusbar { height: 30px; flex: none; display: flex; align-items: center; border-top: 1px solid #d0cec9; padding: 0 0 1px 3px; font-size: 14.500px; }
.btn-reset { width: 49px; height: 23px; }
.sb-box { width: 1750px; height: 28px; margin-left: 5px; border: 1px solid #d0cec9; border-bottom-color: #d0cec9; }
.sb-fps { flex: 1; height: 28px; margin-left: 3px; border: 1px solid #d0cec9; border-right: 0; line-height: 26px; padding-left: 1px; white-space: nowrap; overflow: hidden; }

/* firefox */
.firefox { flex: 1; min-width: 0; display: flex; flex-direction: column; background: #404040; }
.tabs { height: 33px; flex: none; display: flex; align-items: stretch; background: #393835; color: #e0dfdc; font-size: 14.500px; }
.tab { flex: 0 0 202.500px; min-width: 0; display: flex; align-items: center; padding: 0 11px 0 9px; border-right: 1px solid #575652; }
.fav { width: 12px; height: 12px; flex: none; margin-right: 9px; }
.tt { flex: 1; min-width: 0; white-space: nowrap; overflow: hidden; -webkit-mask-image: linear-gradient(90deg, #000 88%, transparent); mask-image: linear-gradient(90deg, #000 88%, transparent); }
.tx { width: 14px; flex: none; text-align: center; color: #d6d5d2; font-size: 15px; margin-left: 8px; }
.tab-nofav { padding-left: 10px; }
.tab-active { background: #f2f1f0; color: #3c3c3c; border-top: 1px solid #c4532a; }
.tab-active .tx { color: #444; }
.tab-last { flex-basis: 204px; }
.newtab { width: 32px; text-align: center; font-size: 22px; line-height: 31px; color: #e0dfdc; }

.nav { height: 42px; flex: none; display: flex; align-items: center; background: #f2f1f0; border-bottom: 1px solid #d0cec9; }
.navback { width: 31px; height: 31px; margin-left: 15px; border: 1px solid #d8d6d2; border-radius: 50%; display: flex; align-items: center; justify-content: center; background: #f5f4f3; flex: none; }
.navback svg { width: 19px; height: 19px; }
.navicon { width: 19px; height: 19px; flex: none; }
.nav-fwd { margin-left: 7px; }
.nav-reload { margin-left: 13px; }
.nav-home { margin-left: 13px; }
.urlbar { width: 1074px; height: 30px; margin-left: 124px; display: flex; align-items: center; background: #fff; border: 1px solid #d4d2ce; border-radius: 3px; flex: none; }
.ub-info { width: 15px; height: 15px; margin-left: 8px; flex: none; }
.ub-lock { width: 12px; height: 15px; margin-left: 4px; flex: none; }
.ub-url { width: 910px; margin-left: 6px; white-space: nowrap; overflow: hidden; color: #9a9a9a; font-size: 14.500px; -webkit-mask-image: linear-gradient(90deg, #000 96%, transparent); mask-image: linear-gradient(90deg, #000 96%, transparent); flex: none; }
.ub-url b { color: #222; font-weight: 400; }
.ub-more { margin-left: 30px; font-size: 8px; color: #555; letter-spacing: 0; white-space: nowrap; }
.ub-pocket { width: 16px; height: 16px; margin-left: 16px; flex: none; }
.ub-star { width: 16px; height: 16px; margin-left: 13px; flex: none; }
.searchbar { width: 295px; height: 30px; margin-left: 12px; display: flex; align-items: center; background: #fff; border: 1px solid #d4d2ce; border-radius: 3px; flex: none; }
.sb-mag { width: 16px; height: 16px; margin-left: 8px; flex: none; }
.sb-text { flex: 1; margin-left: 6px; color: #222; font-size: 14.500px; }
.sb-go { width: 16px; height: 16px; margin-right: 7px; flex: none; }
.tb-lib { width: 16px; height: 15px; margin-left: 124px; flex: none; }
.tb-side { width: 16px; height: 16px; margin-left: 15px; flex: none; }
.tb-menu { width: 15px; height: 15px; margin-left: 25px; flex: none; }

.pdfbar { height: 33px; flex: none; display: flex; align-items: center; background: linear-gradient(#474747, #3c3c3c); border-bottom: 1px solid #2a2a2a; color: #d9d9d9; font-size: 14px; }
.pb-side { width: 15px; height: 15px; margin-left: 13px; flex: none; }
.pb-up { width: 16px; height: 17px; margin-left: 48px; flex: none; }
.pb-sep { width: 1px; height: 18px; background: #5c5c5c; margin: 0 7px; flex: none; }
.pb-down { width: 16px; height: 17px; flex: none; }
.pb-page { width: 54px; height: 24px; margin-left: 11px; padding-right: 5px; background: #4c4c4c; border: 1px solid #2c2c2c; border-radius: 2px; text-align: right; line-height: 22px; flex: none; }
.pb-of { margin-left: 4px; width: 650px; color: #c4c4c4; flex: none; }
.pb-minus { width: 24px; text-align: center; color: #eee; flex: none; font-size: 16px; }
.pb-plus { width: 16px; text-align: center; color: #eee; font-size: 18px; flex: none; }
.pb-zoom { width: 125px; height: 24px; margin-left: 6px; padding-left: 7px; background: #4a4a4a; border: 1px solid #2c2c2c; border-radius: 2px; line-height: 22px; font-size: 13.500px; display: flex; align-items: center; justify-content: space-between; padding-right: 4px; white-space: nowrap; flex: none; }
.pb-updown { width: 8px; height: 14px; flex: none; }
.pb-full { width: 15px; height: 15px; margin-left: 644px; flex: none; }
.pb-r { width: 16px; height: 16px; margin-left: 18px; flex: none; }
.pb-sep-r { margin: 0 0 0 12px; }
.pb-more { width: 15px; height: 15px; margin-left: 12px; flex: none; }

.viewer { height: 910px; flex: none; background: #404040; overflow: hidden; padding-left: 426px; }
.page { width: 993px; height: 910px; background: #fff; padding: 88px 0 0 120px; font-family: "Liberation Sans", Arial, sans-serif; font-size: 16px; line-height: 25px; color: #000; white-space: nowrap; overflow: hidden; }
.page p { margin: 0 0 25px; }
.page ul { margin: 0 0 25px; padding: 0; list-style: none; }
.page li { padding-left: 60px; position: relative; }
.page li::before { content: ""; position: absolute; left: 33px; top: 9px; width: 7px; height: 8px; border-radius: 50%; background: #000; }

.findbar { height: 38px; flex: none; display: flex; align-items: center; background: #f2f1f0; border-top: 1px solid #d0cec9; font-size: 14px; color: #4a4a4a; white-space: nowrap; }
.fb-input { width: 205px; height: 28px; margin-left: 8px; padding-left: 7px; background: #fff; border: 1px solid #c8c6c2; border-right: 0; border-radius: 3px 0 0 3px; line-height: 26px; color: #222; flex: none; }
.fb-arrow { width: 35px; height: 28px; background: #f6f5f4; border: 1px solid #c8c6c2; display: flex; align-items: center; justify-content: center; flex: none; }
.fb-arrow svg { width: 12px; height: 8px; }
.fb-arrow-d { border-left: 0; border-radius: 0 3px 3px 0; }
.fb-opt { flex: none; }
.fb-h { margin-left: 14px; width: 105px; }
.fb-m { width: 97px; }
.fb-w { width: 110px; }
.fb-msg { color: #9a9893; flex: none; }
```
